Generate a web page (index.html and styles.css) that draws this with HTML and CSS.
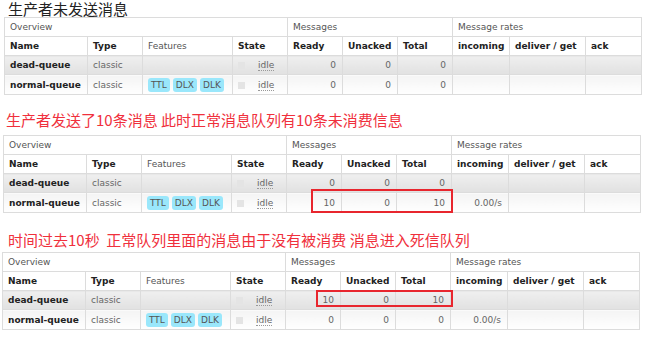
FILE: index.html
```html
<!DOCTYPE html>
<html lang="zh-CN">
<head>
    <meta charset="UTF-8">
    <title>队列状态</title>
    <link rel="stylesheet" href="styles.css">
</head>
<body>
<div class="shot">
    <h2 class="caption caption-first">生产者未发送消息</h2>
    <div class="panel panel-first">
        <table class="queues">
            <colgroup>
                <col class="c-name"><col class="c-type"><col class="c-feat"><col class="c-state">
                <col class="c-num"><col class="c-num"><col class="c-num">
                <col class="c-in"><col class="c-deliver"><col class="c-ack">
            </colgroup>
            <tr class="group-row"><th colspan="4">Overview</th><th colspan="3">Messages</th><th colspan="3">Message rates</th></tr>
            <tr class="head-row"><th>Name</th><th>Type</th><th class="plain">Features</th><th>State</th><th>Ready</th><th>Unacked</th><th>Total</th><th>incoming</th><th>deliver / get</th><th>ack</th></tr>
            <tr class="alt1"><td class="name">dead-queue</td><td>classic</td><td></td><td><span class="box"></span><abbr>idle</abbr></td><td class="num">0</td><td class="num">0</td><td class="num">0</td><td></td><td></td><td></td></tr>
            <tr class="alt2 last"><td class="name">normal-queue</td><td>classic</td><td><span class="tag">TTL</span><span class="tag">DLX</span><span class="tag">DLK</span></td><td><span class="box"></span><abbr>idle</abbr></td><td class="num">0</td><td class="num">0</td><td class="num">0</td><td></td><td></td><td></td></tr>
        </table>
    </div>

    <h2 class="caption caption-alert caption-second">生产者发送了10条消息 此时正常消息队列有10条未消费信息</h2>
    <div class="panel panel-second">
        <table class="queues">
            <colgroup>
                <col class="c-name"><col class="c-type"><col class="c-feat"><col class="c-state">
                <col class="c-num"><col class="c-num"><col class="c-num">
                <col class="c-in"><col class="c-deliver"><col class="c-ack">
            </colgroup>
            <tr class="group-row"><th colspan="4">Overview</th><th colspan="3">Messages</th><th colspan="3">Message rates</th></tr>
            <tr class="head-row"><th>Name</th><th>Type</th><th class="plain">Features</th><th>State</th><th>Ready</th><th>Unacked</th><th>Total</th><th>incoming</th><th>deliver / get</th><th>ack</th></tr>
            <tr class="alt1"><td class="name">dead-queue</td><td>classic</td><td></td><td><span class="box"></span><abbr>idle</abbr></td><td class="num">0</td><td class="num">0</td><td class="num">0</td><td></td><td></td><td></td></tr>
            <tr class="alt2 last"><td class="name">normal-queue</td><td>classic</td><td><span class="tag">TTL</span><span class="tag">DLX</span><span class="tag">DLK</span></td><td><span class="box"></span><abbr>idle</abbr></td><td class="num">10</td><td class="num">0</td><td class="num">10</td><td class="num">0.00/s</td><td></td><td></td></tr>
        </table>
        <div class="mark mark-second"></div>
    </div>

    <h2 class="caption caption-alert caption-third">时间过去10秒&nbsp; 正常队列里面的消息由于没有被消费 消息进入死信队列</h2>
    <div class="panel panel-third">
        <table class="queues">
            <colgroup>
                <col class="c-name"><col class="c-type"><col class="c-feat"><col class="c-state">
                <col class="c-num"><col class="c-num"><col class="c-num">
                <col class="c-in"><col class="c-deliver"><col class="c-ack">
            </colgroup>
            <tr class="group-row"><th colspan="4">Overview</th><th colspan="3">Messages</th><th colspan="3">Message rates</th></tr>
            <tr class="head-row"><th>Name</th><th>Type</th><th class="plain">Features</th><th>State</th><th>Ready</th><th>Unacked</th><th>Total</th><th>incoming</th><th>deliver / get</th><th>ack</th></tr>
            <tr class="alt1"><td class="name">dead-queue</td><td>classic</td><td></td><td><span class="box"></span><abbr>idle</abbr></td><td class="num">10</td><td class="num">0</td><td class="num">10</td><td></td><td></td><td></td></tr>
            <tr class="alt2 last"><td class="name">normal-queue</td><td>classic</td><td><span class="tag">TTL</span><span class="tag">DLX</span><span class="tag">DLK</span></td><td><span class="box"></span><abbr>idle</abbr></td><td class="num">0</td><td class="num">0</td><td class="num">0</td><td class="num">0.00/s</td><td></td><td></td></tr>
        </table>
        <div class="mark mark-third"></div>
    </div>
</div>
</body>
</html>
```

FILE: styles.css
```css
* {
    margin: 0;
    padding: 0;
    box-sizing: border-box;
}
body {
    background: #fff;
    color: #666;
    font-family: "DejaVu Sans", Verdana, sans-serif;
    font-size: 9px;
}
.caption {
    font-family: "Noto Sans CJK SC", sans-serif;
    font-weight: 400;
    font-size: 15px;
    color: #222;
    white-space: nowrap;
}
.caption-alert {
    color: #f0303c;
}
.caption-first {
    height: 17px;
    line-height: 17px;
    padding-left: 8px;
}
.caption-second {
    margin: 15px 0 5px;
    line-height: 20px;
    padding-left: 6px;
}
.caption-third {
    margin: 17px 0 2px;
    line-height: 20px;
    padding-left: 8px;
}
.panel {
    position: relative;
    width: 637px;
}
.panel-first { margin-left: 4px; }
.panel-second { margin-left: 3px; }
.panel-third { margin-left: 2px; }

.queues {
    width: 637px;
    table-layout: fixed;
    border-collapse: collapse;
}
.c-name { width: 83px; }
.c-type { width: 55px; }
.c-feat { width: 90px; }
.c-state { width: 55px; }
.c-num { width: 55px; }
.c-in { width: 57px; }
.c-deliver { width: 76px; }
.c-ack { width: 56px; }

.queues th,
.queues td {
    border: 1px solid #dcdcdc;
    height: 19px;
    padding: 0 5px;
    text-align: left;
    white-space: nowrap;
    overflow: hidden;
    vertical-align: middle;
}
.group-row th {
    font-weight: 400;
    color: #555;
    background: #fff;
}
.head-row th {
    font-weight: 700;
    color: #222;
    background: #fff;
}
.head-row th.plain {
    font-weight: 400;
    color: #555;
}
.alt1 td {
    background: linear-gradient(#efefef, #e1e1e1);
}
.alt2 td {
    background: linear-gradient(#f4f4f4, #fff);
}
.last td {
    height: 20px;
}
.queues td.name {
    font-weight: 700;
    color: #222;
}
.queues td.num {
    text-align: right;
    padding-right: 6px;
}
.tag {
    display: inline-block;
    height: 14px;
    line-height: 14px;
    padding: 0 3px;
    margin-right: 3px;
    border-radius: 3px;
    background: #9ae7fb;
    color: #555;
    vertical-align: middle;
}
.box {
    display: inline-block;
    width: 7px;
    height: 7px;
    margin-right: 13px;
    background: #e4e4e4;
    vertical-align: -1px;
}
abbr {
    text-decoration: none;
    border-bottom: 1px dotted #999;
}
.mark {
    position: absolute;
    border: 2px solid #e8262e;
}
.mark-second {
    left: 308px;
    top: 54px;
    width: 142px;
    height: 24px;
}
.mark-third {
    left: 314px;
    top: 38px;
    width: 137px;
    height: 17px;
}
```
